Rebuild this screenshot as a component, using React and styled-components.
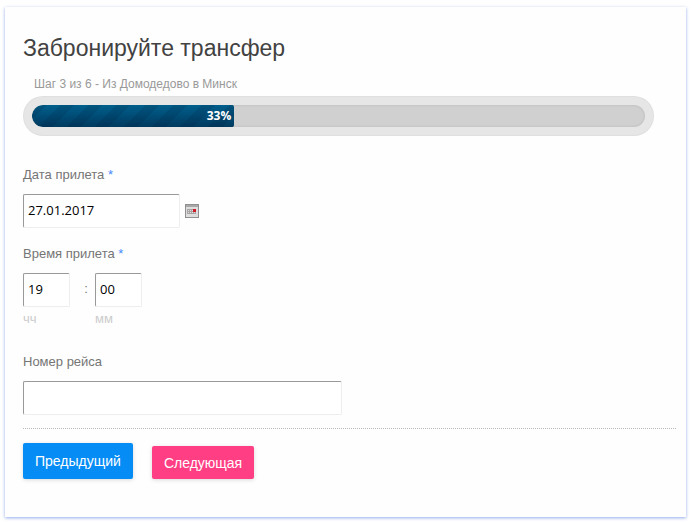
import React from 'react';
import styled, { createGlobalStyle } from 'styled-components';

function CalendarIcon() {
  return (
    <svg width="14" height="14" viewBox="0 0 14 14" shapeRendering="crispEdges">
      <rect width="14" height="14" fill="#909090" />
      <rect x="1" y="3" width="12" height="10" fill="#dedede" />
      <rect x="1" y="1" width="12" height="2" fill="#a8a8a8" />
      <path
        d="M2 5h9v1h-9zM2 7h9v1h-9zM2 9h9v1h-9zM2 5h1v5h-1zM4 5h1v5h-1zM6 5h1v5h-1zM8 5h1v5h-1zM10 5h1v5h-1z"
        fill="#a8a4a4"
      />
      <rect x="8" y="5" width="3" height="3" fill="#d01828" />
    </svg>
  );
}

function App() {
  const percent = 33;

  return (
    <>
      <GlobalStyle />
      <Card onSubmit={(e) => e.preventDefault()}>
        <Title>Забронируйте трансфер</Title>
        <StepText id="step">Шаг 3 из 6 - Из Домодедово в Минск</StepText>
        <Progress
          role="progressbar"
          aria-labelledby="step"
          aria-valuenow={percent}
          aria-valuemin={0}
          aria-valuemax={100}
        >
          <Track>
            <Fill style={{ width: `${percent}%` }}>{percent}%</Fill>
          </Track>
        </Progress>

        <Fields>
          <Field>
            <Label htmlFor="date">
              Дата прилета <Required>*</Required>
            </Label>
            <Row>
              <Input id="date" type="text" $width="157px" defaultValue="27.01.2017" />
              <IconButton type="button" aria-label="Дата прилета">
                <CalendarIcon />
              </IconButton>
            </Row>
          </Field>

          <Field role="group" aria-labelledby="time">
            <Label as="div" id="time">
              Время прилета <Required>*</Required>
            </Label>
            <TimeRow>
              <div>
                <Input id="hours" type="text" $width="47px" defaultValue="19" />
                <SubLabel htmlFor="hours">чч</SubLabel>
              </div>
              <Colon>:</Colon>
              <div>
                <Input id="minutes" type="text" $width="47px" defaultValue="00" />
                <SubLabel htmlFor="minutes">мм</SubLabel>
              </div>
            </TimeRow>
          </Field>

          <Field $spaced>
            <Label htmlFor="flight">Номер рейса</Label>
            <Input id="flight" type="text" $width="319px" />
          </Field>
        </Fields>

        <Footer>
          <Button type="button" $color="#058df5" $height="36px">
            Предыдущий
          </Button>
          <Button type="submit" $color="#ff3e83" $height="33px">
            Следующая
          </Button>
        </Footer>
      </Card>
    </>
  );
}

export default App;

const GlobalStyle = createGlobalStyle`
  * {
    box-sizing: border-box;
  }
  body {
    margin: 0;
    padding: 7px 5px 5px;
    background: #fff;
    font-family: "Liberation Sans", Arial, sans-serif;
  }
`;

const Card = styled.form`
  padding: 24px 10px 38px 18px;
  background: #fefefe;
  box-shadow: 0 1px 3px rgba(40, 90, 220, 0.5);
`;

const Title = styled.h1`
  margin: 0;
  font-size: 23px;
  font-weight: normal;
  line-height: 34px;
  color: #424242;
`;

const StepText = styled.p`
  margin: 10px 11px 3px;
  font-size: 12px;
  line-height: 18px;
  color: #999;
`;

const Progress = styled.div`
  margin-right: 22px;
  padding: 9px;
  border-radius: 20px;
  background: #e6e6e6;
  box-shadow: inset 0 0 1px 1px rgba(0, 0, 0, 0.03);
`;

const Track = styled.div`
  height: 22px;
  overflow: hidden;
  border-radius: 20px;
  background: #d0d0d0;
  box-shadow: inset 0 0 2px 1px rgba(0, 0, 0, 0.06);
`;

const Fill = styled.div`
  height: 22px;
  padding-right: 3px;
  border-radius: 20px 3px 3px 20px;
  background-color: #036;
  background-image: linear-gradient(rgba(0, 20, 50, 0), rgba(0, 20, 50, 0.5)),
    repeating-linear-gradient(
      135deg,
      #005580 0,
      #005580 10px,
      #005f8c 10px,
      #005f8c 20px
    );
  font-family: "Open Sans", sans-serif;
  font-size: 12px;
  font-weight: bold;
  line-height: 22px;
  text-align: right;
  color: #fff;
`;

const Fields = styled.div`
  display: flex;
  flex-direction: column;
  gap: 15px;
  margin-top: 28px;
`;

const Field = styled.div`
  margin-top: ${(props) => (props.$spaced ? '9px' : '0')};
`;

const Label = styled.label`
  display: block;
  margin-bottom: 8px;
  font-size: 13px;
  line-height: 22px;
  color: #757575;
`;

const Required = styled.span`
  color: #448aff;
`;

const Row = styled.div`
  display: flex;
  align-items: center;
  gap: 5px;
`;

const TimeRow = styled.div`
  display: flex;
`;

const Colon = styled.span`
  width: 25px;
  padding-left: 7px;
  font-size: 13px;
  line-height: 32px;
  text-align: center;
  color: #757575;
`;

const Input = styled.input`
  display: block;
  width: ${(props) => props.$width};
  max-width: 100%;
  height: 34px;
  padding: 0 4px 2px;
  border: 1px solid;
  border-color: #999 #eee #eee #999;
  border-radius: 2px;
  background: #fff;
  font-family: "Open Sans", sans-serif;
  font-size: 13px;
  color: #000;
`;

const SubLabel = styled.label`
  display: block;
  margin-top: 4px;
  font-size: 13px;
  line-height: 16px;
  color: #ccc;
`;

const IconButton = styled.button`
  padding: 0;
  border: none;
  background: none;
  line-height: 0;
  cursor: pointer;
`;

const Footer = styled.div`
  display: flex;
  align-items: flex-end;
  gap: 19px;
  margin-top: 13px;
  padding-top: 14px;
  border-top: 1px dotted #bbb;
`;

const Button = styled.button`
  height: ${(props) => props.$height};
  padding: 0 12px;
  border: none;
  border-radius: 2px;
  background: ${(props) => props.$color};
  box-shadow: 0 1px 4px rgba(0, 0, 0, 0.15);
  font-family: "Liberation Sans", Arial, sans-serif;
  font-size: 14px;
  color: #fff;
  cursor: pointer;
`;
